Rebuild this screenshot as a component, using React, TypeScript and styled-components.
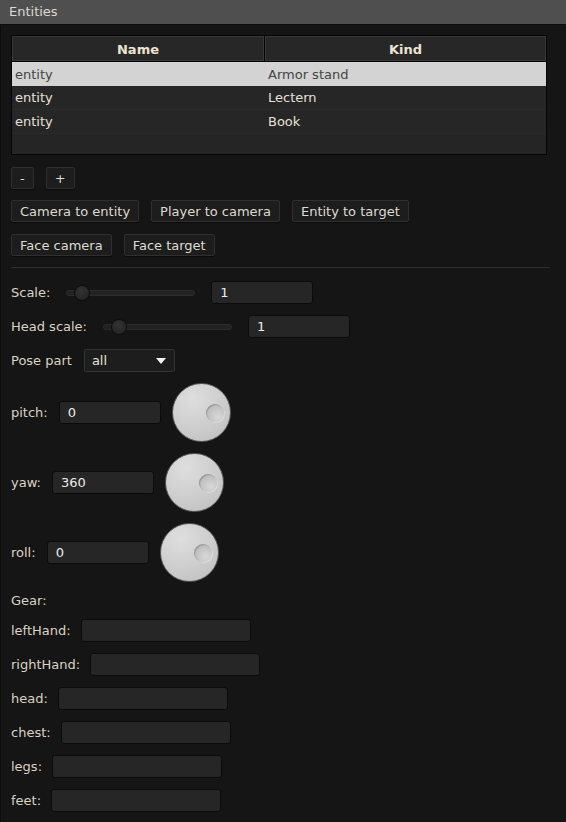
import styled, { createGlobalStyle } from "styled-components";

const Global = createGlobalStyle`
  html, body {
    margin: 0;
    padding: 0;
    background: #151515;
  }
  body {
    font-family: "DejaVu Sans", "Liberation Sans", sans-serif;
    font-size: 13px;
  }
`;

const Window = styled.div`
  width: 566px;
  min-height: 822px;
  background: #151515;
  display: flex;
  flex-direction: column;
`;

const TitleBar = styled.div`
  height: 24px;
  line-height: 24px;
  padding-left: 9px;
  background: #4f4f4f;
  color: #ddd8d0;
  border-bottom: 1px solid #0c0c0c;
`;

const Content = styled.div`
  flex: 1;
  border-left: 1px solid #0b0b0b;
  padding: 10px 15px 0 10px;
  display: flex;
  flex-direction: column;
  gap: 11px;
  color: #dbd2c3;
`;

const Table = styled.div`
  width: 536px;
  box-sizing: border-box;
  border: 1px solid #050505;
  background: #252525;
`;

const HeaderRow = styled.div`
  display: grid;
  grid-template-columns: 252px 1fr;
  gap: 1px;
  background: #050505;
  border-bottom: 1px solid #050505;
`;

const HeaderCell = styled.div`
  height: 25px;
  box-sizing: border-box;
  border: 1px solid #383838;
  background: #272727;
  color: #efe3d0;
  font-weight: bold;
  display: flex;
  align-items: center;
  justify-content: center;
  padding-top: 1px;
`;

const Rows = styled.div`
  height: 92px;
`;

const Row = styled.div<{ selected?: boolean }>`
  display: grid;
  grid-template-columns: 253px 1fr;
  height: 24px;
  background: ${({ selected }) => (selected ? "#d3d3d3" : "#262626")};
  color: ${({ selected }) => (selected ? "#454545" : "#e6e0d6")};
  border-bottom: ${({ selected }) => (selected ? "none" : "1px solid #2a2a2a")};
  box-sizing: border-box;
`;

const Cell = styled.div`
  padding-left: 3px;
  display: flex;
  align-items: center;
`;

const ButtonRow = styled.div<{ offset?: number }>`
  display: flex;
  gap: 12px;
  margin-top: ${({ offset }) => offset ?? 0}px;
`;

const Button = styled.button`
  font-family: "DejaVu Sans", "Liberation Sans", sans-serif;
  font-size: 13px;
  color: #dedad2;
  background: #1d1d1d;
  border: 1px solid #2f2f2f;
  border-radius: 2px;
  height: 22px;
  padding: 0 8px;
  box-shadow: 0 1px 0 #0a0a0a;
`;

const Separator = styled.div`
  height: 1px;
  background: #2f2f2f;
  margin: 0 0 2px 0;
  width: 539px;
`;

const FieldRow = styled.div<{ gap?: number }>`
  display: flex;
  align-items: center;
  gap: ${({ gap }) => gap ?? 11}px;
`;

const Label = styled.span`
  color: #dbd2c3;
  white-space: nowrap;
`;

const Slider = styled.div`
  position: relative;
  width: 129px;
  height: 6px;
  margin: 0 5px;
  border-radius: 3px;
  background: #222;
  border: 1px solid #2b2b2b;
  box-sizing: border-box;
`;

const Thumb = styled.div`
  position: absolute;
  left: 15px;
  top: 50%;
  width: 16px;
  height: 16px;
  margin-left: -8px;
  margin-top: -8px;
  border-radius: 50%;
  background: radial-gradient(circle at 45% 35%, #333 0%, #262626 70%);
  border: 1px solid #0d0d0d;
  box-sizing: border-box;
`;

const Input = styled.div<{ w: number }>`
  width: ${({ w }) => w}px;
  height: 23px;
  box-sizing: border-box;
  background: #262626;
  border: 1px solid #0b0b0b;
  border-radius: 3px;
  color: #ececec;
  padding: 0 8px;
  display: flex;
  align-items: center;
`;

const Select = styled.div`
  width: 91px;
  height: 23px;
  box-sizing: border-box;
  background: #1d1d1d;
  border: 1px solid #333;
  border-radius: 2px;
  color: #e6e2da;
  padding: 0 7px;
  display: flex;
  align-items: center;
  justify-content: space-between;
`;

const Caret = styled.span`
  width: 0;
  height: 0;
  border-left: 5px solid transparent;
  border-right: 5px solid transparent;
  border-top: 6px solid #f0f0f0;
  margin-right: 1px;
`;

const Knob = styled.div`
  position: relative;
  width: 59px;
  height: 59px;
  box-sizing: border-box;
  border-radius: 50%;
  border: 1px solid #5c5c5c;
  background: radial-gradient(circle at 35% 25%, #dedede 0%, #d0d0d0 45%, #c2c2c2 85%, #a8a8a8 100%);
`;

const KnobDot = styled.div`
  position: absolute;
  right: 6px;
  top: 50%;
  width: 18px;
  height: 18px;
  margin-top: -9px;
  border-radius: 50%;
  background: radial-gradient(circle at 65% 70%, #d8d8d8 0%, #c0c0c0 60%, #a6a6a6 100%);
  box-shadow: inset 1px 1px 1px rgba(0, 0, 0, 0.18), 1px 1px 0 rgba(255, 255, 255, 0.35);
`;

const GearRow = styled(FieldRow)``;

const entities = [
  { name: "entity", kind: "Armor stand" },
  { name: "entity", kind: "Lectern" },
  { name: "entity", kind: "Book" },
];

const rotations = [
  { label: "pitch:", value: "0" },
  { label: "yaw:", value: "360" },
  { label: "roll:", value: "0" },
];

const gear = ["leftHand:", "rightHand:", "head:", "chest:", "legs:", "feet:"];

export default function App() {
  return (
    <Window>
      <Global />
      <TitleBar>Entities</TitleBar>
      <Content>
        <Table>
          <HeaderRow>
            <HeaderCell>Name</HeaderCell>
            <HeaderCell>Kind</HeaderCell>
          </HeaderRow>
          <Rows>
            {entities.map((e, i) => (
              <Row key={i} selected={i === 0}>
                <Cell>{e.name}</Cell>
                <Cell>{e.kind}</Cell>
              </Row>
            ))}
          </Rows>
        </Table>

        <ButtonRow offset={1}>
          <Button>-</Button>
          <Button>+</Button>
        </ButtonRow>
        <ButtonRow>
          <Button>Camera to entity</Button>
          <Button>Player to camera</Button>
          <Button>Entity to target</Button>
        </ButtonRow>
        <ButtonRow offset={1}>
          <Button>Face camera</Button>
          <Button>Face target</Button>
        </ButtonRow>

        <Separator />

        <FieldRow gap={11}>
          <Label>Scale:</Label>
          <Slider>
            <Thumb />
          </Slider>
          <Input w={102}>1</Input>
        </FieldRow>
        <FieldRow gap={11}>
          <Label>Head scale:</Label>
          <Slider>
            <Thumb />
          </Slider>
          <Input w={102}>1</Input>
        </FieldRow>
        <FieldRow gap={12}>
          <Label>Pose part</Label>
          <Select>
            all
            <Caret />
          </Select>
        </FieldRow>

        {rotations.map((r) => (
          <FieldRow key={r.label} gap={11}>
            <Label>{r.label}</Label>
            <Input w={102}>{r.value}</Input>
            <Knob>
              <KnobDot />
            </Knob>
          </FieldRow>
        ))}

        <Label>Gear:</Label>
        {gear.map((g) => (
          <GearRow key={g} gap={10}>
            <Label>{g}</Label>
            <Input w={170} />
          </GearRow>
        ))}
      </Content>
    </Window>
  );
}
